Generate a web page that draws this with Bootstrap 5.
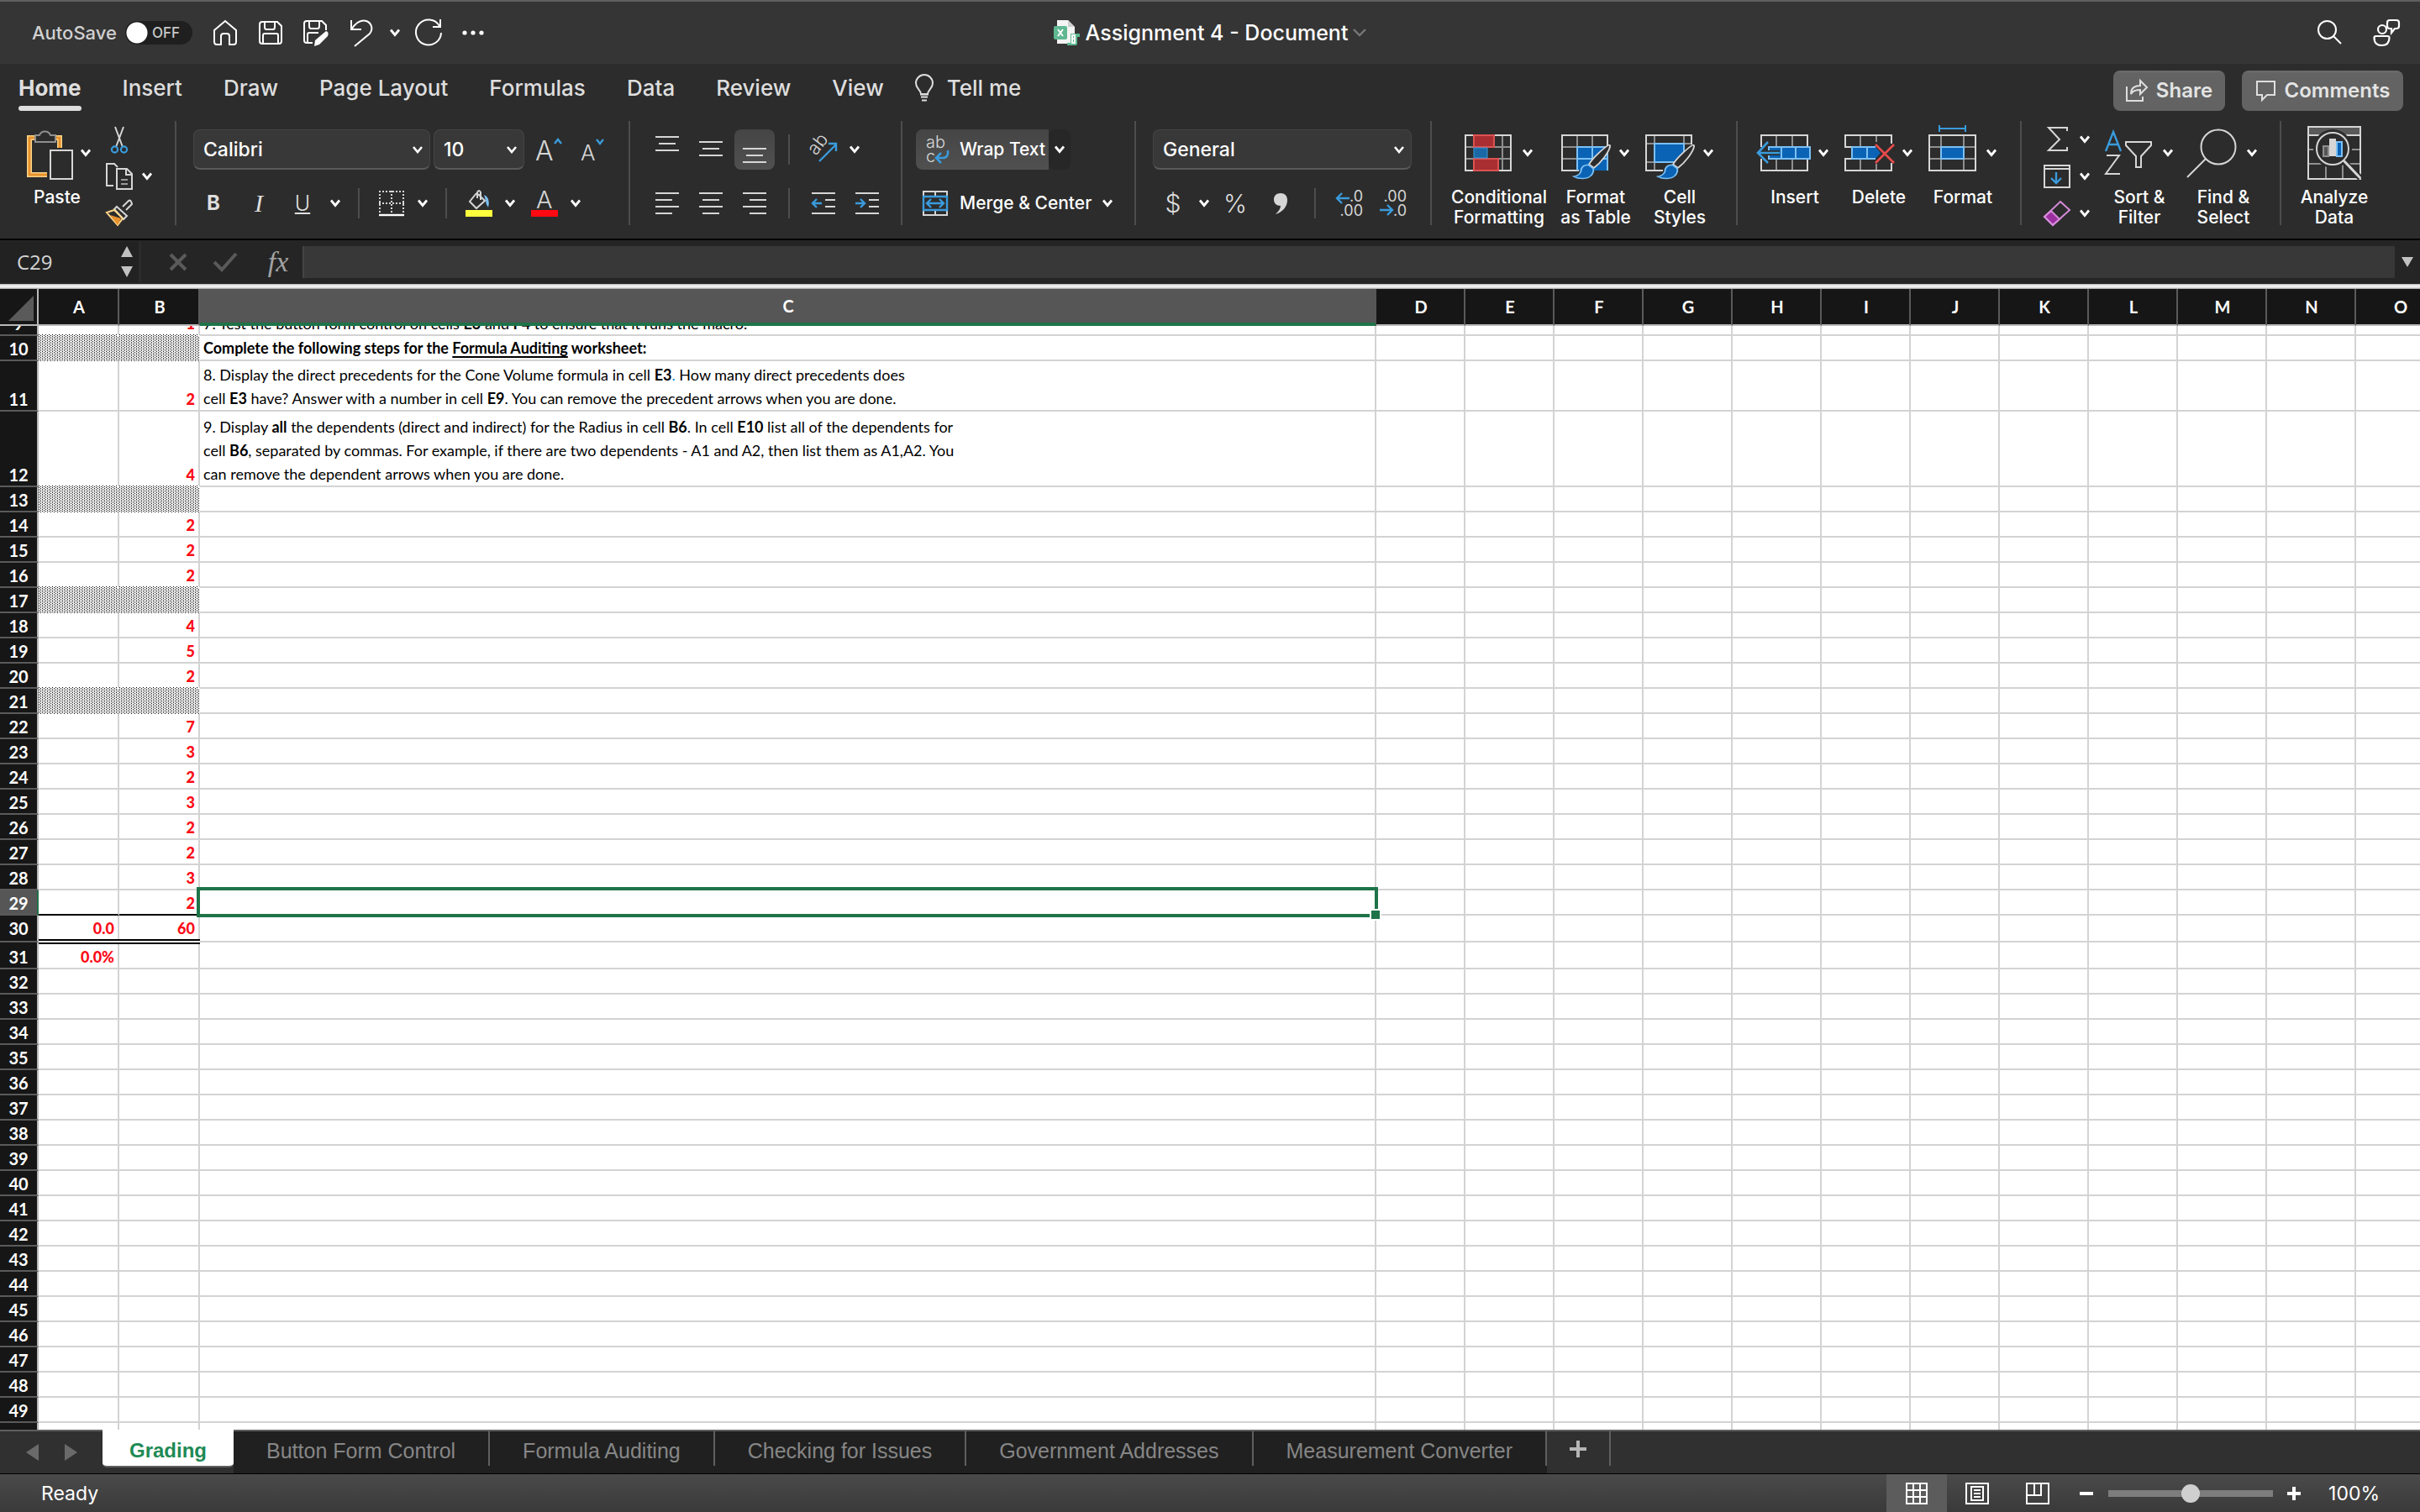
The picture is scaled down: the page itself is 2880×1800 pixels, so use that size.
<!DOCTYPE html>
<html lang="en" data-bs-theme="dark">
<head>
<meta charset="utf-8">
<meta name="viewport" content="width=device-width, initial-scale=1">
<title>Assignment 4 - Document</title>
<link href="https://cdn.jsdelivr.net/npm/bootstrap@5.3.0/dist/css/bootstrap.min.css" rel="stylesheet">
<style>
  :root { --ink:#dedede; --blue:#3a9bdc; --green:#1f7349; --grid:#d3d3d3; }
  body { font-family: Inter, "Noto Sans", sans-serif; color:#fff; background:#2c2c2c; font-size:21px; line-height:24px; }
  svg { display:block; overflow:visible; flex:none; }
  svg:not([fill]) { fill:none; }
  .btn { --bs-btn-color:var(--ink); --bs-btn-border-width:0; --bs-btn-padding-x:0; --bs-btn-padding-y:0; --bs-btn-font-size:21px; --bs-btn-line-height:24px; --bs-btn-border-radius:8px; display:flex; align-items:center; justify-content:center; white-space:nowrap; flex:none; }

  /* title bar */
  .titlebar { display:grid; grid-template-columns:1fr auto 1fr; height:76px; background:#353535; border-top:2px solid #5f5f5f; }
  .autosave { color:#d0d0d0; font-size:22px; font-weight:500; padding:0 10px 0 38px; }
  .switchbox { width:80px; height:28px; margin-right:12px; }
  .switchbox input { appearance:none; width:80px; height:28px; margin:0; display:block; border-radius:14px; background:radial-gradient(circle at 14px 14px,#fff 12px,transparent 13px),#1f1f1f; }
  .switchbox span { left:32px; top:2px; font-size:17px; font-weight:500; color:#c8c8c8; pointer-events:none; }
  .tool { width:54px; height:54px; }
  .doc-title { font-size:25px; font-weight:500; line-height:30px; gap:6px; }

  /* ribbon */
  .tabrow { height:68px; padding:0 20px 0 22px; }
  .ribbon-tabs { gap:49px; padding-top:12px; }
  .ribbon-tabs .nav-link { padding:0; color:var(--ink); font-size:26px; font-weight:500; line-height:34px; }
  .ribbon-tabs .active { font-weight:700; }
  .ribbon-tabs .active::after { content:""; display:block; height:6px; margin-top:4px; border-radius:3px; background:var(--ink); }
  .pill { height:48px; margin-top:8px; background:linear-gradient(#6c6c6c,#636363 4px); font-size:24px; font-weight:600; color:#e4e4e4; gap:10px; }
  .ribbon { height:142px; border-bottom:2px solid #000; }
  .group { height:124px; border-right:2px solid #4d4d4d; flex:none; }
  .group:last-child { border:0; }
  .stacked { padding-top:10px; display:flex; flex-direction:column; gap:16px; }
  .stacked > div { display:flex; height:48px; align-items:center; flex:none; }
  .ib { width:48px; height:48px; margin:0 2px; }
  .nb { width:48px; height:48px; }
  .cb { width:26px; height:48px; }
  .on { background:linear-gradient(#454545,#505050); }
  .sep { width:2px; height:36px; margin:0 14px; background:#4d4d4d; }
  .form-select { flex:none; height:48px; padding:0 36px 0 11px; color:#fff; font-size:23px; font-weight:500; line-height:28px; background:#383838 url("data:image/svg+xml,%3Csvg xmlns='http://www.w3.org/2000/svg' viewBox='0 0 14 10'%3E%3Cpath d='M2 2l5 6 5-6' fill='none' stroke='%23fff' stroke-width='2.6'/%3E%3C/svg%3E") no-repeat right 7px center / 14px 10px; border:1px solid #454545; border-bottom:2px solid #5a5a5a; border-radius:8px; }
  .big { width:100px; flex-direction:column; justify-content:flex-start; padding-top:6px; --bs-btn-color:#fff; font-weight:500; }
  .big > div { display:flex; gap:8px; align-items:center; margin-bottom:9px; }
  .wide { width:130px; }
  .mini { width:56px; height:44px; gap:10px; }
  .label-btn { height:48px; padding-left:8px; gap:12px; --bs-btn-color:#fff; font-weight:500; justify-content:flex-start; }
  .glyph { font-size:30px; font-weight:300; line-height:34px; }

  /* formula bar */
  .formulabar { height:52px; background:#252525; }
  .namebox { width:168px; height:48px; padding:0 6px 0 20px; background:#222; border-right:3px solid #2b2b2b; }
  .namebox input { width:100px; padding:0; border:0; background:none; color:#d4d4d4; font:24px/32px "Open Sans", sans-serif; }
  .fx { width:72px; padding-left:14px; font:italic 34px/40px "Liberation Serif", serif; color:#a2a2a2; }
  .fxinput { flex:1; height:38px; border:0; border-left:2px solid #444; background:#383838; border-radius:0; padding:0 10px; color:#fff; min-width:0; }
  .rim { height:6px; background:linear-gradient(#b5b5b5,#f5f5f5 40%,#e8e8e8 70%,#999); }

  /* sheet */
  .sheet { flex:1 1 0; min-height:0; overflow:hidden; background:#fff; }
  .cells { table-layout:fixed; width:2910px; border-collapse:separate; border-spacing:0; font-family:Lato, "Open Sans", sans-serif; color:#000; }
  .cells th { background:#161616; color:#fff; font-size:20px; font-weight:700; line-height:26px; padding:0; text-align:center; }
  .cells thead th { height:44px; border-right:2px solid #5a5a5a; border-bottom:2px solid #b9b9b9; vertical-align:middle; }
  .cells thead th + th { padding-left:2px; }
  .cells thead th:first-child { border-right-color:#b9b9b9; }
  .cells thead th.picked { background:#565656; border-right-color:#565656; border-bottom:4px solid var(--green); }
  .cells tbody th { vertical-align:bottom; border-right:2px solid #b9b9b9; border-bottom:2px solid #5a5a5a; overflow:hidden; }
  .cells tbody th.picked { background:#565656; border-right-color:var(--green); }
  .cells td { height:30px; padding:0 4px; font-size:18px; line-height:28px; vertical-align:bottom; border-right:2px solid var(--grid); border-bottom:2px solid var(--grid); white-space:nowrap; position:relative; }
  .cells td.pts { color:#fb0a16; font-weight:900; line-height:26px; text-align:right; }
  .cells tr.totals > * { padding-bottom:2px; }
  .cells .cut { height:10px; line-height:26px; overflow:hidden; display:flex; flex-direction:column; justify-content:flex-end; }
  .cells tr.partial td, .cells tr.partial th { height:12px; }
  :root { --hatch:url("data:image/svg+xml,%3Csvg xmlns='http://www.w3.org/2000/svg' width='4' height='2' shape-rendering='crispEdges'%3E%3Crect width='4' height='2' fill='%23fff'/%3E%3Cpath d='M0 0h1v1H0zM2 1h1v1H2z' fill='%23000'/%3E%3C/svg%3E"); }
  .cells td.hatch { background:var(--hatch); border-color:transparent; }
  .cells td.over-hatch { background:linear-gradient(#fff,#fff) padding-box, var(--hatch) border-box; border-bottom-color:transparent; }
  .cells td.total-top { border-bottom-color:#000; }
  .cells td.total::after { content:""; position:absolute; left:0; right:-2px; bottom:-4px; height:6px; background:#fff; border:solid #000; border-width:2px 0; z-index:1; }
  .cursor-cell::before { content:""; position:absolute; inset:-4px; border:4px solid var(--green); z-index:2; }
  .cursor-cell::after { content:""; position:absolute; right:-8px; bottom:-8px; width:14px; height:14px; background:var(--green); border:2px solid #fff; z-index:3; }
  u { text-underline-offset:3px; text-decoration-thickness:2px; }

  /* sheet tabs and status */
  .tabbar { height:52px; background:#303030; border-top:2px solid #5f5f5f; font-family:"Liberation Sans", Arial, sans-serif; }
  .sheet-tabs { background:#202020; }
  .sheet-tabs .nav-link { position:relative; height:50px; padding:0 41px 3px 39px; border-radius:0; color:#868686; font-size:25px; line-height:46px; }
  .sheet-tabs .nav-link:not(.active)::after { content:""; position:absolute; right:0; top:0; width:2px; height:41px; background:#5f5f5f; }
  .sheet-tabs .nav-item:first-child { background:#303030; }
  .sheet-tabs .nav-link.active { height:45px; margin-top:-2px; padding:2px 32px 0; background:#fff; color:#1f8a55; font-size:24px; font-weight:700; border-radius:0 0 5px 5px; border-bottom:2px solid #5f5f5f; }
  .addtab { width:76px; height:41px; border-right:2px solid #5f5f5f; border-radius:0; }
  .statusbar { height:46px; border-top:1px solid #000; background:linear-gradient(#4a4a4a,#3a3a3a); font-size:23px; }
  .view { width:72px; height:45px; border-radius:0; }
  .zoomer { appearance:none; width:196px; height:24px; margin:0; background:linear-gradient(#7d7d7d,#7d7d7d) center/100% 8px no-repeat; }
  .zoomer::-webkit-slider-thumb { appearance:none; width:22px; height:22px; border-radius:50%; background:#cfcfcf; }
</style>
</head>
<body class="d-flex flex-column vh-100 overflow-hidden m-0">

<svg width="0" height="0" class="position-absolute" aria-hidden="true">
  <symbol id="chev" viewBox="0 0 14 10"><path d="M2 1.5l5 6 5-6" stroke="#fff" stroke-width="2.8" fill="none"/></symbol>
  <symbol id="brush" viewBox="0 0 50 60"><path d="M46 1C40 6 27 21 22 32l6 6C37 29 47 12 48 3c0-2-1-3-2-2z" fill="#2c2c2c" stroke="#d6d6d6" stroke-width="2"/><path d="M21 33c-7 0-9 6-9 10-1 5-5 8-9 9 7 5 17 4 21-1 3-4 4-8 3-12z" fill="#0a63b5" stroke="#7cc0f4" stroke-width="2"/></symbol>
</svg>

<header class="titlebar flex-shrink-0">
  <div class="d-flex align-items-center">
    <label class="autosave" for="autosave">AutoSave</label>
    <div class="switchbox position-relative"><input type="checkbox" role="switch" id="autosave"><span class="position-absolute">OFF</span></div>
    <button class="btn tool" aria-label="Home"><svg width="30" height="32" stroke="#fff" stroke-width="2"><path d="M2 13 15 2l13 11v14q0 3-3 3h-5V20q0-3-3-3h-4q-3 0-3 3v10H5q-3 0-3-3z"/></svg></button>
    <button class="btn tool" aria-label="Save"><svg width="28" height="28" stroke="#fff" stroke-width="2"><path d="M1 4q0-3 3-3h18l5 5v18q0 3-3 3H4q-3 0-3-3zM7 1v6q0 3 2 3h8q2 0 2-3V1M5 27V17q0-2 2-2h14q2 0 2 2v10"/></svg></button>
    <button class="btn tool" aria-label="Save a copy"><svg width="30" height="30" stroke="#fff" stroke-width="2"><path d="M11 27H4q-3 0-3-3V4q0-3 3-3h18l5 5v6M7 1v6q0 3 2 3h8q2 0 2-3V1M5 27V17q0-2 2-2h11"/><path d="M27 13q4 1 2 6L19 29l-6 2 1-7z" fill="#fff" stroke="none"/></svg></button>
    <button class="btn tool" aria-label="Undo"><svg width="28" height="34" stroke="#fff" stroke-width="2"><path d="M2 2v11h12M2 13C8 4 14 1 20 3c7 3 8 10 4 15L6 33"/></svg></button>
    <button class="btn cb" aria-label="Undo options"><svg width="14" height="10"><use href="#chev"/></svg></button>
    <button class="btn tool" aria-label="Redo"><svg width="34" height="34" stroke="#fff" stroke-width="2"><path d="M31 1v9h-9M30 9A15 15 0 1 0 32 17"/></svg></button>
    <button class="btn tool" aria-label="More"><svg width="28" height="6" fill="#fff"><circle cx="3" cy="3" r="2.6"/><circle cx="13" cy="3" r="2.6"/><circle cx="23" cy="3" r="2.6"/></svg></button>
  </div>
  <div class="d-flex align-items-center doc-title">
    <svg width="32" height="30" viewBox="0 0 32 30"><path d="M4 0h13l8 8v20H4z" fill="#f4f4f4"/><path d="M17 0l8 8h-8z" fill="#cfcfcf"/><rect y="7" width="16" height="16" rx="2" fill="#5fb891"/><path d="M5 11l6 8m0-8-6 8" stroke="#fff" stroke-width="2"/><path d="M20 16h11v4h-3v8q0 2-2 2H16v-3h4z" fill="#5fb891"/><path d="M21 17h5v11h-5z" fill="#fff"/><path d="M23.500 19v2m0 2v3" stroke="#5fb891"/></svg>
    <span>Assignment 4 - Document</span>
    <svg width="16" height="10" stroke="#777" stroke-width="2.400"><path d="M1 1l7 7 7-7"/></svg>
  </div>
  <div class="d-flex align-items-center justify-content-end" style="padding-right:13px;gap:14px">
    <button class="btn tool" aria-label="Search"><svg width="28" height="30" stroke="#fff" stroke-width="2"><circle cx="11.500" cy="11.500" r="10.500"/><path d="M19 19l9 9"/></svg></button>
    <button class="btn tool" aria-label="Account"><svg width="32" height="32" stroke="#fff" stroke-width="2.200"><circle cx="11" cy="12" r="5"/><path d="M1.500 22q0-2 2-2h14q2 0 2 2c0 6-3 9-9 9s-9-3-9-9zM19 1h9q3 0 3 3v4q0 3-3 3h-2l-4 5v-5h-2q-3 0-3-3V4q0-3 3-3z"/></svg></button>
  </div>
</header>

<div class="d-flex justify-content-between align-items-start flex-shrink-0 tabrow">
  <ul class="nav ribbon-tabs flex-nowrap">
    <li class="nav-item"><a class="nav-link active" href="#">Home</a></li>
    <li class="nav-item"><a class="nav-link" href="#">Insert</a></li>
    <li class="nav-item"><a class="nav-link" href="#">Draw</a></li>
    <li class="nav-item"><a class="nav-link" href="#">Page Layout</a></li>
    <li class="nav-item"><a class="nav-link" href="#">Formulas</a></li>
    <li class="nav-item"><a class="nav-link" href="#">Data</a></li>
    <li class="nav-item"><a class="nav-link" href="#">Review</a></li>
    <li class="nav-item"><a class="nav-link" href="#">View</a></li>
    <li class="nav-item" style="margin-left:-12px"><a class="nav-link d-flex align-items-center" href="#"><svg width="22" height="32" class="me-3" stroke="#dedede" stroke-width="2"><path d="M7 23c0-5-6-6-6-13a10 10 0 0 1 20 0c0 7-6 8-6 13zM7 26.500h8M8 30.500h6M6 23.500h10"/></svg>Tell me</a></li>
  </ul>
  <div class="d-flex" style="gap:20px">
    <button class="btn pill" style="width:133px"><svg width="26" height="26" stroke="#dedede" stroke-width="2"><path d="M1 8v17h19v-5M6 17c0-7 4-10 11-10V1l8 8-8 8v-5c-5 0-9 1-11 5z"/></svg>Share</button>
    <button class="btn pill" style="width:192px"><svg width="25" height="24" stroke="#dedede" stroke-width="2"><path d="M2 1h21v16H14l-6 6v-6H2z"/></svg>Comments</button>
  </div>
</div>

<div class="d-flex align-items-start flex-shrink-0 ribbon">
  <!-- clipboard -->
  <div class="group d-flex" style="padding:0 26px 0 18px">
    <button class="btn big"><div><svg width="60" height="64" viewBox="0 0 60 64"><path d="M15 14H8v44h21M38 14h6v12" stroke="#fbd58a" stroke-width="6"/><path d="M15 14H8v44h21M38 14h6v12" stroke="#e8912d" stroke-width="3"/><path d="M15 19v-8h5a7 7 0 0 1 13 0h6v8z" stroke="#8f8f8f" stroke-width="2" fill="#2c2c2c"/><path d="M33 29h26v34H33z" fill="#2c2c2c" stroke="#d6d6d6" stroke-width="2"/></svg><svg width="14" height="10"><use href="#chev"/></svg></div>Paste</button>
    <div class="ms-2">
      <button class="btn mini justify-content-start" aria-label="Cut"><svg width="32" height="32"><path d="M11 1l9 24M21 1l-9 24" stroke="#d6d6d6" stroke-width="2"/><circle cx="10.500" cy="28" r="3.600" stroke="#3a9bdc" stroke-width="2.200"/><circle cx="21.500" cy="28" r="3.600" stroke="#3a9bdc" stroke-width="2.200"/></svg></button>
      <button class="btn mini" aria-label="Copy"><svg width="32" height="32" stroke="#d6d6d6" stroke-width="2"><path d="M9 27H1V1h9l4 4M13 7h12l6 6v18H13zM24 7v7h7"/><path d="M18 20h8M18 25h8" stroke="#999"/></svg><svg width="14" height="10"><use href="#chev"/></svg></button>
      <button class="btn mini justify-content-start" aria-label="Format painter"><svg width="32" height="32"><path d="M20 8l7-7q2-1 3 1t1 3l-7 7" stroke="#d6d6d6" stroke-width="2"/><path d="M13 8l12 11-4 4L10 11z" stroke="#d6d6d6" stroke-width="2"/><path d="M10 12L1 15l13 15 6-8z" stroke="#fbd58a" stroke-width="2"/><path d="M5 18l13 4-4 8z" fill="#e8912d"/></svg></button>
    </div>
  </div>
  <!-- font -->
  <div class="group stacked" style="width:540px;padding-left:20px">
    <div><select class="form-select me-1" style="width:282px" aria-label="Font"><option>Calibri</option></select><select class="form-select" style="width:108px" aria-label="Font size"><option>10</option></select>
      <button class="btn ib ms-1" aria-label="Grow font"><svg width="30" height="30"><text x="0" y="28" font-size="32" font-weight="300" fill="#d6d6d6">A</text><path d="M23 8l4-5 4 5" stroke="#3a9bdc" stroke-width="2.400"/></svg></button>
      <button class="btn ib" aria-label="Shrink font"><svg width="26" height="30"><text x="0" y="28" font-size="26" font-weight="300" fill="#d6d6d6">A</text><path d="M19 3l4 5 4-5" stroke="#3a9bdc" stroke-width="2.400"/></svg></button></div>
    <div><button class="btn nb fw-bold fs-4 me-1">B</button><button class="btn ib fst-italic glyph" style="font-family:'Liberation Serif',serif">I</button><button class="btn ib glyph text-decoration-underline" style="font-size:25px">U</button><button class="btn cb" aria-label="Underline options"><svg width="14" height="10"><use href="#chev"/></svg></button>
      <div class="sep"></div>
      <button class="btn nb" aria-label="Borders"><svg width="30" height="30"><path d="M0 1h30M0 15h30M1 0v26M15 0v26M29 0v26" stroke="#d6d6d6" stroke-width="2" stroke-dasharray="2 2"/><path d="M0 29h30" stroke="#fff" stroke-width="2.400"/></svg></button><button class="btn cb" aria-label="Border options"><svg width="14" height="10"><use href="#chev"/></svg></button>
      <div class="sep"></div>
      <button class="btn nb" aria-label="Fill color"><svg width="32" height="32"><path d="M13 4L5 14l8 8 10-9L15 5M14 10V3q2-4 4 0v9" stroke="#d6d6d6" stroke-width="2"/><path d="M22 6q8 3 5 15-3-4-3-8z" fill="#7cc0f4"/><rect y="24" width="32" height="8" fill="#ffff3d"/></svg></button><button class="btn cb" aria-label="Fill options"><svg width="14" height="10"><use href="#chev"/></svg></button>
      <button class="btn nb ms-1" aria-label="Font color"><svg width="32" height="32"><text x="6" y="22" font-size="29" font-weight="300" fill="#d6d6d6">A</text><rect y="24" width="32" height="8" fill="#ff0a12"/></svg></button><button class="btn cb" aria-label="Font color options"><svg width="14" height="10"><use href="#chev"/></svg></button></div>
  </div>
  <!-- alignment -->
  <div class="group stacked" style="width:324px;padding-left:18px">
    <div><button class="btn ib" aria-label="Top align"><svg width="28" height="32" stroke="#d6d6d6" stroke-width="2"><path d="M0 1h28M4 9h20M0 17h28"/></svg></button>
      <button class="btn ib" aria-label="Middle align"><svg width="28" height="32" stroke="#d6d6d6" stroke-width="2"><path d="M0 7h28M4 15h20M0 23h28"/></svg></button>
      <button class="btn ib on" aria-label="Bottom align"><svg width="28" height="32" stroke="#d6d6d6" stroke-width="2"><path d="M0 15h28M4 23h20M0 31h28"/></svg></button>
      <div class="sep"></div>
      <button class="btn ib me-0" aria-label="Orientation"><svg width="32" height="32"><text transform="translate(7 24) rotate(-52)" font-size="22" fill="#d6d6d6" font-weight="300">ab</text><path d="M11 30L31 10M22 9h9v9" stroke="#3a9bdc" stroke-width="2.400"/></svg></button><button class="btn cb" aria-label="Orientation options"><svg width="14" height="10"><use href="#chev"/></svg></button></div>
    <div><button class="btn ib" aria-label="Align left"><svg width="28" height="26" stroke="#d6d6d6" stroke-width="2"><path d="M0 1h28M0 9h20M0 17h28M0 25h20"/></svg></button>
      <button class="btn ib" aria-label="Center"><svg width="28" height="26" stroke="#d6d6d6" stroke-width="2"><path d="M0 1h28M4 9h20M0 17h28M4 25h20"/></svg></button>
      <button class="btn ib" aria-label="Align right"><svg width="28" height="26" stroke="#d6d6d6" stroke-width="2"><path d="M0 1h28M8 9h20M0 17h28M8 25h20"/></svg></button>
      <div class="sep"></div>
      <button class="btn ib" aria-label="Decrease indent"><svg width="28" height="26" stroke="#d6d6d6" stroke-width="2"><path d="M0 1h28M16 9h12M16 17h12M0 25h28"/><path d="M12 13H1M6 8l-5 5 5 5" stroke="#3a9bdc" stroke-width="2.400"/></svg></button>
      <button class="btn ib" aria-label="Increase indent"><svg width="28" height="26" stroke="#d6d6d6" stroke-width="2"><path d="M0 1h28M16 9h12M16 17h12M0 25h28"/><path d="M0 13h11M6 8l5 5-5 5" stroke="#3a9bdc" stroke-width="2.400"/></svg></button></div>
  </div>
  <!-- wrap and merge -->
  <div class="group stacked" style="width:278px;padding-left:16px">
    <div><button class="btn label-btn on rounded-end-0" style="width:158px"><svg width="32" height="32"><text x="4" y="14" font-size="20" font-weight="300" fill="#d6d6d6">ab</text><text x="4" y="31" font-size="20" font-weight="300" fill="#d6d6d6">c</text><path d="M30 17q1 9-6 9h-7M22 20l-6 6 6 6" stroke="#3a9bdc" stroke-width="2.600"/></svg>Wrap Text</button><button class="btn cb" style="background:#272727" aria-label="Wrap options"><svg width="14" height="10"><use href="#chev"/></svg></button></div>
    <div><button class="btn label-btn"><svg width="32" height="30" stroke-width="2"><path d="M1 7V1h28v6M1 23v6h28v-6M15 1v6M15 23v6" stroke="#d6d6d6"/><path d="M1 7h28v16H1zM5 15h20M10 10l-5 5 5 5M20 10l5 5-5 5" stroke="#3a9bdc" stroke-width="2.400"/></svg>Merge &amp; Center<svg width="14" height="10"><use href="#chev"/></svg></button></div>
  </div>
  <!-- number -->
  <div class="group stacked" style="width:352px;padding-left:20px">
    <div><select class="form-select" style="width:308px" aria-label="Number format"><option>General</option></select></div>
    <div><button class="btn nb glyph" aria-label="Currency">$</button><button class="btn cb" aria-label="Currency options"><svg width="14" height="10"><use href="#chev"/></svg></button>
      <button class="btn nb glyph me-1" aria-label="Percent">%</button>
      <button class="btn ib" aria-label="Comma"><svg width="16" height="26"><path d="M8 1c5 0 8 3 8 8 0 8-5 14-14 17 4-4 6-7 6-10-5 0-8-3-8-7.500S3 1 8 1z" fill="#d6d6d6"/></svg></button>
      <div class="sep"></div>
      <button class="btn ib" aria-label="Increase decimal"><svg width="32" height="32"><g fill="#d6d6d6" font-size="18" font-weight="400"><text x="32" y="14" text-anchor="end">.0</text><text x="32" y="31" text-anchor="end">.00</text></g><path d="M16 10H1M7 4l-6 6 6 6" stroke="#3a9bdc" stroke-width="2.400"/></svg></button>
      <button class="btn ib" aria-label="Decrease decimal"><svg width="32" height="32"><g fill="#d6d6d6" font-size="18" font-weight="400"><text x="32" y="14" text-anchor="end">.00</text><text x="32" y="31" text-anchor="end">.0</text></g><path d="M0 24h15M9 18l6 6-6 6" stroke="#3a9bdc" stroke-width="2.400"/></svg></button></div>
  </div>
  <!-- styles -->
  <div class="group d-flex align-items-start" style="padding:0 17px 0 15px">
    <button class="btn big wide"><div><svg width="60" height="64"><path d="M1 25h54M1 39h54M45 11v42" stroke="#8f8f8f" stroke-width="2"/><path d="M1 11h54v42H1z" stroke="#d6d6d6" stroke-width="2"/><path d="M11 11h24v14H11zM11 39h29v14H11z" fill="#a92e31" stroke="#dd5252" stroke-width="2"/><path d="M11 26h16v12H11z" fill="#1a68a5" stroke="#3a9bdc"/></svg><svg width="14" height="10"><use href="#chev"/></svg></div>Conditional<br>Formatting</button>
    <button class="btn big"><div><svg width="60" height="64"><path d="M19 25h35v28H19z" fill="#0a63b5"/><path d="M1 25h18M1 39h18M19 11v14M37 11v14M19 39v14" stroke="#8f8f8f" stroke-width="2"/><path d="M55 25V11H1v42h20" stroke="#d6d6d6" stroke-width="2"/><path d="M19 53V25h36v28M19 39h36M37 25v28" stroke="#7cc0f4" stroke-width="2"/><svg x="12" y="22" width="48" height="44" viewBox="0 0 50 60" preserveAspectRatio="none"><use href="#brush"/></svg></svg><svg width="14" height="10"><use href="#chev"/></svg></div>Format<br>as Table</button>
    <button class="btn big"><div><svg width="60" height="64"><path d="M11 21h34v21H11z" fill="#0a63b5"/><path d="M1 21h54M1 43h30M11 11v42M46 11v12" stroke="#8f8f8f" stroke-width="2"/><path d="M55 22V11H1v42h20" stroke="#d6d6d6" stroke-width="2"/><path d="M11 21h35v22H11z" stroke="#7cc0f4" stroke-width="2"/><svg x="12" y="22" width="48" height="44" viewBox="0 0 50 60" preserveAspectRatio="none"><use href="#brush"/></svg></svg><svg width="14" height="10"><use href="#chev"/></svg></div>Cell<br>Styles</button>
  </div>
  <!-- cells -->
  <div class="group d-flex align-items-start" style="padding:0 18px 0 18px">
    <button class="btn big"><div><svg width="60" height="64" stroke-width="2"><path d="M19 11v42M38 11v42" stroke="#8f8f8f"/><path d="M1 25V11h55v14M1 39v14h55V39" stroke="#d6d6d6"/><path d="M10 25h49v14H10z" fill="#0a63b5" stroke="#7cc0f4"/><path d="M25 25v14M42 25v14" stroke="#7cc0f4"/><path d="M-1 32h24" stroke="#2c2c2c" stroke-width="6"/><path d="M-3 32h26M9 19L-3 32l12 12" stroke="#3a9bdc" stroke-width="2.600"/></svg><svg width="14" height="10"><use href="#chev"/></svg></div>Insert</button>
    <button class="btn big"><div><svg width="60" height="64" stroke-width="2"><path d="M19 11v14M38 11v8M19 39v14M38 45v8" stroke="#8f8f8f"/><path d="M9 25H1V11h55v10M9 39H1v14h55v-9" stroke="#d6d6d6"/><path d="M9 25h28l6 7-6 7H9z" fill="#0a63b5"/><path d="M37 25H9v14h28M27 25v14" stroke="#7cc0f4"/><path d="M37 22l22 22M59 22L37 44" stroke="#e94b4b" stroke-width="2.600"/></svg><svg width="14" height="10"><use href="#chev"/></svg></div>Delete</button>
    <button class="btn big"><div><svg width="60" height="64" stroke-width="2"><path d="M15 11v42M42 11v42M1 25h55M1 39h55" stroke="#8f8f8f"/><path d="M1 11h55v42H1z" stroke="#d6d6d6"/><path d="M15 25h27v14H15z" fill="#0a63b5" stroke="#7cc0f4"/><path d="M13 3h31M13 -1v8M44 -1v8" stroke="#3a9bdc"/></svg><svg width="14" height="10"><use href="#chev"/></svg></div>Format</button>
  </div>
  <!-- editing -->
  <div class="group d-flex align-items-start" style="padding:0 17px 0 26px">
    <div class="me-2">
      <button class="btn mini" aria-label="AutoSum"><svg width="32" height="30" stroke="#d6d6d6" stroke-width="2"><path d="M28 5V1H6l13 14L6 28h22v-4"/></svg><svg width="14" height="10"><use href="#chev"/></svg></button>
      <button class="btn mini" aria-label="Fill"><svg width="32" height="28" stroke="#d6d6d6" stroke-width="2"><path d="M1 1h30v26H1zM1 5h30"/><path d="M15 9v13M9 16l6 6 6-6" stroke="#3a9bdc" stroke-width="2.400"/></svg><svg width="14" height="10"><use href="#chev"/></svg></button>
      <button class="btn mini" aria-label="Clear"><svg width="32" height="32" stroke="#d58bd9" stroke-width="2"><path d="M1 20l8-7 10 10-8 7z" fill="#9b2fa0"/><path d="M20 2l11 10-20 18L1 20z"/></svg><svg width="14" height="10"><use href="#chev"/></svg></button>
    </div>
    <button class="btn big"><div><svg width="60" height="64"><g fill="none" stroke-width="2.400"><path d="M1 30L10 7l9 23M4 22h12" stroke="#3a9bdc"/><path d="M2 35h15L1 57h17" stroke="#d6d6d6" stroke-width="2"/></g><path d="M25 19h30v4L43 36v13h-6V36L25 23z" stroke="#d6d6d6" stroke-width="2"/></svg><svg width="14" height="10"><use href="#chev"/></svg></div>Sort &amp;<br>Filter</button>
    <button class="btn big"><div><svg width="60" height="64" stroke="#d6d6d6" stroke-width="2"><circle cx="35" cy="25" r="20.500"/><path d="M20 39L-2 61"/></svg><svg width="14" height="10"><use href="#chev"/></svg></div>Find &amp;<br>Select</button>
  </div>
  <!-- analysis -->
  <div class="group d-flex align-items-start" style="padding-left:13px">
    <button class="btn big"><div><svg width="64" height="64" stroke-width="2"><path d="M1 1h62v10H1z" fill="#5a5a5a"/><path d="M1 28h62M1 45h62M22 45v18M42 45v18" stroke="#8f8f8f"/><path d="M1 1h62v62H1zM1 11h62" stroke="#d6d6d6"/><circle cx="30" cy="27" r="23" fill="#2c2c2c"/><circle cx="30" cy="27" r="19" stroke="#d6d6d6"/><path d="M43 42l20 20" stroke="#2c2c2c" stroke-width="7"/><path d="M43 41l20 21" stroke="#d6d6d6" stroke-width="3"/><path d="M19 24h6v12h-6z" fill="#555" stroke="#8f8f8f"/><path d="M26 15h8v21h-8z" fill="#d6d6d6"/><path d="M35 19h6v17h-6z" fill="#0a63b5" stroke="#7cc0f4"/></svg></div>Analyze<br>Data</button>
  </div>
</div>

<div class="d-flex align-items-center flex-shrink-0 formulabar">
  <div class="d-flex align-items-center justify-content-between namebox">
    <input type="text" value="C29" aria-label="Name box">
    <svg width="16" height="38" fill="#c2c2c2"><path d="M1 13L8 0l7 13zM1 24h14L8 37z"/></svg>
  </div>
  <button class="btn ms-4 tool" style="width:40px" aria-label="Cancel"><svg width="22" height="22" stroke="#5a5a5a" stroke-width="4"><path d="M2 2l18 18M20 2L2 20"/></svg></button>
  <button class="btn tool ms-3" style="width:40px" aria-label="Enter"><svg width="30" height="24" stroke="#5a5a5a" stroke-width="4"><path d="M2 12l9 9L28 2"/></svg></button>
  <button class="btn fx">fx</button>
  <input class="fxinput" type="text" aria-label="Formula">
  <button class="btn" style="width:30px" aria-label="Expand formula bar"><svg width="16" height="14" fill="#c2c2c2"><path d="M1 1h14L8 13z"/></svg></button>
</div>
<div class="rim flex-shrink-0"></div>

<main class="sheet">
  <table class="cells">
    <colgroup><col style="width:46px"><col style="width:96px"><col style="width:96px"><col style="width:1400px"></colgroup>
    <thead><tr id="letters"><th aria-label="Select all"><svg width="44" height="42"><path d="M40 8v30H10z" fill="#5a5a5a"/></svg></th></tr></thead>
    <tbody id="rows"></tbody>
  </table>
</main>

<div class="d-flex flex-shrink-0 tabbar">
  <div class="d-flex align-items-center justify-content-center" style="width:122px;gap:31px">
    <svg width="15" height="20" fill="#6a6a6a"><path d="M15 0v20L0 10z"/></svg><svg width="15" height="20" fill="#6a6a6a"><path d="M0 0v20l15-10z"/></svg>
  </div>
  <ul class="nav flex-nowrap sheet-tabs">
    <li class="nav-item"><a class="nav-link active" href="#">Grading</a></li>
    <li class="nav-item"><a class="nav-link" href="#">Button Form Control</a></li>
    <li class="nav-item"><a class="nav-link" href="#">Formula Auditing</a></li>
    <li class="nav-item"><a class="nav-link" href="#">Checking for Issues</a></li>
    <li class="nav-item"><a class="nav-link" href="#">Government Addresses</a></li>
    <li class="nav-item"><a class="nav-link" href="#">Measurement Converter</a></li>
  </ul>
  <button class="btn addtab" aria-label="Add sheet"><svg width="20" height="20" stroke="#b5b5b5" stroke-width="4"><path d="M10 0v20M0 10h20"/></svg></button>
</div>

<footer class="d-flex align-items-center justify-content-between flex-shrink-0 statusbar">
  <span style="padding-left:49px">Ready</span>
  <div class="d-flex align-items-center">
    <button class="btn view" style="background:#5c5c5c" aria-label="Normal view"><svg width="26" height="26" stroke="#fff" stroke-width="2"><path d="M1 1h24v24H1zM1 9h24M1 17h24M9 1v24M17 1v24"/></svg></button>
    <button class="btn view" aria-label="Page layout view"><svg width="28" height="26" stroke="#fff" stroke-width="2"><path d="M1 1h26v24H1zM7 5h14v16H7zM10 9h8M10 13h8M10 17h8"/></svg></button>
    <button class="btn view" aria-label="Page break view"><svg width="28" height="26" stroke="#fff" stroke-width="2"><path d="M1 1h26v24H1zM1 15h17V1M10 1v14"/></svg></button>
    <button class="btn" style="width:44px" aria-label="Zoom out"><svg width="16" height="4"><path d="M0 2h16" stroke="#fff" stroke-width="4"/></svg></button>
    <input class="zoomer mx-1" type="range" min="0" max="100" value="50" aria-label="Zoom">
    <button class="btn" style="width:42px" aria-label="Zoom in"><svg width="16" height="16" stroke="#fff" stroke-width="4"><path d="M8 0v16M0 8h16"/></svg></button>
    <span style="padding:0 48px 0 20px">100%</span>
  </div>
</footer>

<script src="https://cdn.jsdelivr.net/npm/bootstrap@5.3.0/dist/js/bootstrap.bundle.min.js"></script>
<script>
  const letters = 'ABCDEFGHIJKLMNO'.split('');
  const head = document.getElementById('letters');
  letters.forEach(l => head.insertAdjacentHTML('beforeend', `<th scope="col"${l === 'C' ? ' class="picked"' : ''}>${l}</th>`));

  const points = {9:1,11:2,12:4,14:2,15:2,16:2,18:4,19:5,20:2,22:7,23:3,24:2,25:3,26:2,27:2,28:3,29:2,30:60};
  const scores = {30:'0.0', 31:'0.0%'};
  const steps = {
    9:'7. Test the button form control on cells <b>E3</b> and <b>F4</b> to ensure that it runs the macro.',
    10:'<b>Complete the following steps for the <u>Formula Auditing</u> worksheet:</b>',
    11:'8. Display the direct precedents for the Cone Volume formula in cell <b>E3</b><span style="color:#0a84d8">.</span> How many direct precedents does<br>cell <b>E3</b> have? Answer with a number in cell <b>E9</b>. You can remove the precedent arrows when you are done.',
    12:'9. Display <b>all</b> the dependents (direct and indirect) for the Radius in cell <b>B6</b>. In cell <b>E10</b> list all of the dependents for<br>cell <b>B6</b>, separated by commas. For example, if there are two dependents - A1 and A2, then list them as A1,A2. You<br>can remove the dependent arrows when you are done.'
  };
  const heights = {11:60, 12:90, 30:32, 31:32};
  const shaded = [10,13,17,21];
  const rowClass = {9:'partial', 30:'totals'};
  let html = '';
  for (let r = 9; r <= 50; r++) {
    const wrap = t => r === 9 ? `<div class="cut"><div>${t}</div></div>` : t;
    const mark = shaded.includes(r) ? ' hatch' : shaded.includes(r + 1) ? ' over-hatch' : r === 29 ? ' total-top' : r === 30 ? ' total' : '';
    html += `<tr class="${rowClass[r] || ''}"${heights[r] ? ` style="height:${heights[r]}px"` : ''}><th scope="row"${r === 29 ? ' class="picked"' : ''}>${wrap(r)}</th>`
      + `<td class="pts${mark}">${wrap(scores[r] || '')}</td><td class="pts${mark}">${wrap(points[r] || '')}</td>`
      + `<td${r === 29 ? ' class="cursor-cell"' : ''}>${wrap(steps[r] || '')}</td>` + '<td></td>'.repeat(12) + '</tr>';
  }
  document.getElementById('rows').innerHTML = html;
</script>
</body>
</html>
